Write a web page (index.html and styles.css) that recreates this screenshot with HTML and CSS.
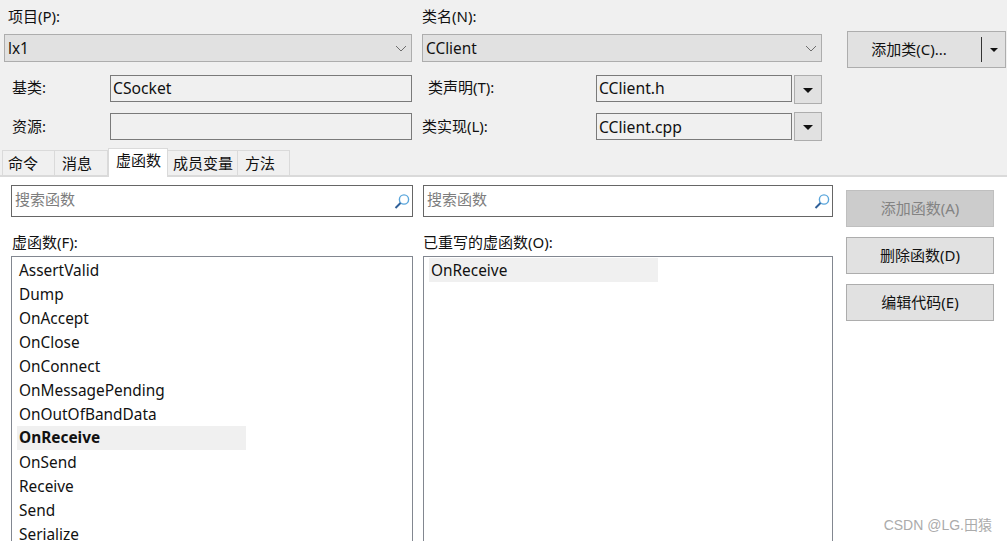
FILE: index.html
```html
<!DOCTYPE html>
<html lang="zh">
<head>
<meta charset="utf-8">
<title>类向导</title>
<link rel="stylesheet" href="styles.css">
</head>
<body>
<div class="top">
  <div class="top-main">
    <div class="col col-left">
      <div class="cap cap-project">项目(P):</div>
      <div class="combo"><span class="combo-text">lx1</span><svg class="chev" width="12" height="7" viewBox="0 0 12 7"><path d="M1 1l5 5 5-5" fill="none" stroke="#6d6d6d"/></svg></div>
      <div class="field-row row-a"><span class="lbl lbl-base">基类:</span><div class="input base-input">CSocket</div></div>
      <div class="field-row row-b"><span class="lbl lbl-base">资源:</span><div class="input base-input"></div></div>
    </div>
    <div class="col col-mid">
      <div class="cap cap-class">类名(N):</div>
      <div class="combo"><span class="combo-text">CClient</span><svg class="chev" width="12" height="7" viewBox="0 0 12 7"><path d="M1 1l5 5 5-5" fill="none" stroke="#6d6d6d"/></svg></div>
      <div class="field-row row-a"><span class="lbl lbl-decl">类声明(T):</span><div class="input file-input">CClient.h</div><div class="drop"><i class="tri"></i></div></div>
      <div class="field-row row-b"><span class="lbl lbl-impl">类实现(L):</span><div class="input file-input">CClient.cpp</div><div class="drop"><i class="tri"></i></div></div>
    </div>
    <div class="col-right">
      <div class="add-class"><span class="add-text">添加类(C)...</span><span class="sep"></span><span class="add-arrow"><i class="tri tri-sm"></i></span></div>
    </div>
  </div>
  <div class="tabs">
    <div class="tab tab-cmd">命令</div>
    <div class="tab tab-msg">消息</div>
    <div class="tab tab-active">虚函数</div>
    <div class="tab tab-var">成员变量</div>
    <div class="tab tab-method">方法</div>
  </div>
</div>
<div class="bottom">
  <div class="pane pane-left">
    <div class="search"><span>搜索函数</span><svg class="mag" width="16" height="17" viewBox="0 0 16 17"><circle cx="10" cy="6.5" r="4.6" fill="#fff" stroke="#5aa6dc" stroke-width="1.4"/><path d="M6.5 10L1.5 15" stroke="#2f5f98" stroke-width="2"/></svg></div>
    <div class="list-cap">虚函数(F):</div>
    <div class="list">
      <div class="item">AssertValid</div>
      <div class="item">Dump</div>
      <div class="item">OnAccept</div>
      <div class="item">OnClose</div>
      <div class="item">OnConnect</div>
      <div class="item">OnMessagePending</div>
      <div class="item">OnOutOfBandData</div>
      <div class="item item-sel item-bold">OnReceive</div>
      <div class="item">OnSend</div>
      <div class="item">Receive</div>
      <div class="item">Send</div>
      <div class="item">Serialize</div>
    </div>
  </div>
  <div class="pane pane-mid">
    <div class="search"><span>搜索函数</span><svg class="mag" width="16" height="17" viewBox="0 0 16 17"><circle cx="10" cy="6.5" r="4.6" fill="#fff" stroke="#5aa6dc" stroke-width="1.4"/><path d="M6.5 10L1.5 15" stroke="#2f5f98" stroke-width="2"/></svg></div>
    <div class="list-cap">已重写的虚函数(O):</div>
    <div class="list">
      <div class="item item-sel">OnReceive</div>
    </div>
  </div>
  <div class="actions">
    <div class="btn btn-off">添加函数(A)</div>
    <div class="btn">删除函数(D)</div>
    <div class="btn">编辑代码(E)</div>
  </div>
</div>
<div class="mark">CSDN @LG.田猿</div>
</body>
</html>
```
FILE: styles.css
```css
* { box-sizing: border-box; }
html, body { margin: 0; padding: 0; }
body {
  width: 1007px;
  height: 541px;
  overflow: hidden;
  position: relative;
  background: #fff;
  color: #111;
  font-family: "Noto Sans", "Noto Sans CJK SC", sans-serif;
  font-size: 15.4px;
  line-height: 20px;
}
.top {
  height: 177px;
  background: #f0f0f0;
  border-bottom: 2px solid #dadada;
  padding-top: 7px;
}
.top-main { display: flex; height: 134px; }
.col { display: flex; flex-direction: column; height: 134px; }
.col-left { width: 408px; margin-left: 4px; }
.col-mid { width: 400px; margin-left: 10px; }
.col-right { margin-left: 25px; padding-top: 24px; }
.cap { height: 20px; margin-bottom: 7px; font-size: 15px; line-height: 18px; }
.cap-project { padding-left: 4px; }
.combo {
  height: 28px;
  background: #e1e1e1;
  border: 1px solid #adadad;
  display: flex;
  align-items: center;
  justify-content: space-between;
  padding: 0 4px 0 3px;
}
.combo-text { padding-top: 2px; }
.field-row { display: flex; align-items: flex-start; height: 28px; margin-top: 13px; }
.row-b { margin-top: 10px; }
.lbl { font-size: 15px; line-height: 27px; display: block; flex: none; }
.row-a .lbl { line-height: 25px; }
.lbl-base { width: 106px; padding-left: 8px; }
.lbl-decl { width: 174px; padding-left: 6px; }
.lbl-impl { width: 174px; }
.input {
  height: 27px;
  border: 1px solid #7a7a7a;
  background: #f0f0f0;
  line-height: 26px;
  padding-left: 2px;
  font-size: 15.7px;
}
.row-a .input { line-height: 25px; }
.base-input { width: 302px; }
.file-input { width: 196px; }
.drop {
  width: 28px;
  height: 29px;
  margin-left: 2px;
  border: 1px solid #adadad;
  background: #e1e1e1;
  display: flex;
  align-items: center;
  justify-content: center;
}
.row-b .drop { margin-top: -1px; }
.tri {
  display: block;
  width: 0;
  height: 0;
  margin-top: 2px;
  border-left: 5px solid transparent;
  border-right: 5px solid transparent;
  border-top: 5px solid #111;
}
.tri-sm { border-left-width: 4px; border-right-width: 4px; border-top-width: 4px; margin-top: 0; }
.add-class {
  width: 159px;
  height: 37px;
  background: #e1e1e1;
  border: 1px solid #adadad;
  display: flex;
  align-items: center;
  font-size: 15px;
}
.add-text { width: 133px; text-align: center; padding: 0 11px 2px 0; }
.sep { width: 1px; height: 25px; background: #333; }
.add-arrow { flex: 1; display: flex; justify-content: center; }
.tabs { display: flex; align-items: flex-end; height: 27px; padding-left: 2px; margin-top: 7px; font-size: 15px; }
.tab {
  height: 25px;
  background: #f0f0f0;
  border: 1px solid #dadada;
  border-bottom: 0;
  border-left: 0;
  line-height: 24px;
}
.tab-cmd { width: 53px; padding-left: 5px; border-left: 1px solid #dadada; }
.tab-msg { width: 53px; padding-left: 7px; }
.tab-active {
  width: 60px;
  height: 29px;
  margin-bottom: -2px;
  background: #fff;
  padding-left: 7px;
  line-height: 23px;
  position: relative;
  border-left: 1px solid #dadada;
}
.tab-var { width: 70px; padding-left: 5px; }
.tab-method { width: 52px; padding-left: 7px; }
.bottom { display: flex; height: 364px; background: #fff; overflow: hidden; }
.pane { width: 402px; flex: none; padding-top: 8px; }
.pane-left { margin-left: 11px; }
.pane-mid { margin-left: 10px; width: 410px; }
.search {
  height: 32px;
  border: 1px solid #666;
  display: flex;
  align-items: center;
  justify-content: space-between;
  padding: 0 2px 5px 3px;
  color: #7d7d7d;
  font-size: 15px;
}
.mag { margin-top: 6px; }
.list-cap { height: 39px; padding-top: 15px; padding-left: 1px; font-size: 15px; line-height: 20px; }
.pane-mid .list-cap { padding-left: 0; }
.list {
  height: 320px;
  border: 1px solid #828790;
  padding: 1px 5px;
}
.item { height: 24px; line-height: 26px; padding-left: 2px; width: 229px; }
.item-sel { background: #f0f0f0; }
.item-bold { font-weight: 700; line-height: 24px; }
.actions { margin-left: 13px; width: 148px; padding-top: 13px; display: flex; flex-direction: column; gap: 10px; }
.btn {
  height: 37px;
  background: #e1e1e1;
  border: 1px solid #adadad;
  display: flex;
  align-items: center;
  justify-content: center;
  padding-bottom: 2px;
  font-size: 15px;
}
.btn-off { background: #cccccc; color: #838383; border-color: #bfbfbf; }
.mark {
  position: absolute;
  right: 15px;
  top: 515px;
  color: #ababab;
  font-size: 14px;
  font-family: "Liberation Sans", "Noto Sans CJK SC", sans-serif;
}
```
